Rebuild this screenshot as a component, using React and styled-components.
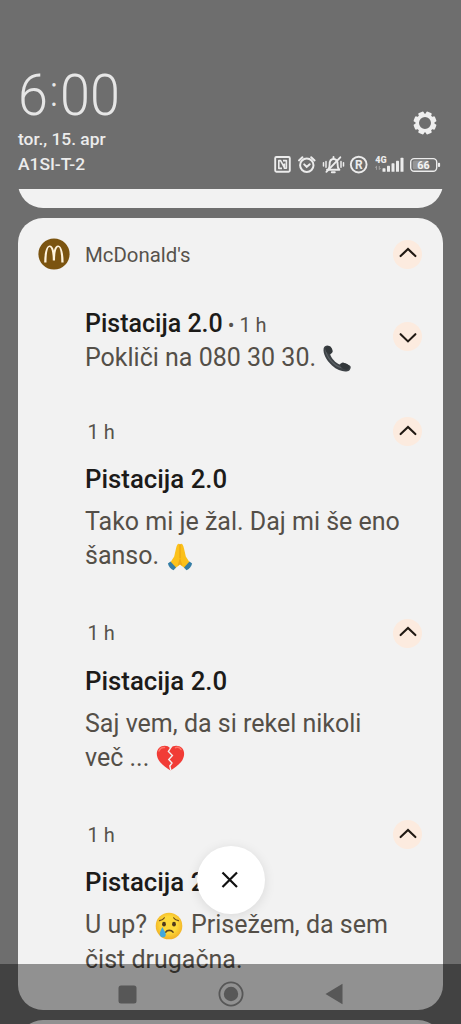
import React from "react";
import styled, { createGlobalStyle, css } from "styled-components";

const GlobalStyle = createGlobalStyle`
    * {
        box-sizing: border-box;
    }

    body {
        margin: 0;
        background: #6e6e6e;
        font-family: Roboto, "Liberation Sans", sans-serif;
    }

    svg {
        display: block;
        flex: none;
    }
`

const Screen = styled.div`
    position: relative;
    width: 461px;
    height: 1024px;
    overflow: hidden;
    background: #6e6e6e;

    display: flex;
    flex-direction: column;
`

const StatusHeader = styled.header`
    flex: none;
    height: 189px;
    padding: 66px 20px 12px 18px;
    color: #ececec;

    display: flex;
    justify-content: space-between;
`

const ClockArea = styled.div`
    display: flex;
    flex-direction: column;
`

const Clock = styled.div`
    height: 61px;
    line-height: 58px;
    font-size: 58px;
    font-weight: 300;
    white-space: nowrap;
    color: #e6e6e6;
    transform: scaleX(0.93);
    transform-origin: left;

    display: flex;
`

const ClockColon = styled.span`
    font-size: 43px;
    line-height: 50px;
    padding: 0 2px;
`

const StatusText = styled.div`
    line-height: 25px;
    font-size: 17.4px;
    font-weight: 500;
    white-space: nowrap;
`

const StatusSide = styled.div`
    display: flex;
    flex-direction: column;
    align-items: flex-end;
    justify-content: space-between;
    padding-top: 45px;
`

const GearWrap = styled.div`
    padding-right: 4px;
`

const StatusIcons = styled.div`
    height: 25px;

    display: flex;
    align-items: center;
`

const Shade = styled.main`
    flex: 1;
    min-height: 0;
    overflow: hidden;

    display: flex;
    flex-direction: column;
    padding: 0 18px;
`

const Peek = styled.div`
    flex: none;
    overflow: hidden;
    height: ${(props) => props.$height}px;

    display: flex;
    align-items: ${(props) => (props.$end ? "flex-end" : "flex-start")};
`

const PeekCard = styled.div`
    flex: none;
    width: 100%;
    height: 80px;
    background: #f2f2f2;
    border-radius: 25px;
`

const Card = styled.section`
    flex: none;
    height: 792px;
    margin: 10px 0;
    padding: 20px 21px 0 20px;
    background: #f2f2f2;
    border-radius: 25px;
`

const CardHeader = styled.div`
    height: 32px;

    display: flex;
    align-items: center;
`

const AppName = styled.div`
    flex: 1;
    margin-left: 15px;
    padding-top: 1px;
    font-size: 20.4px;
    line-height: 28px;
    color: #57524c;
`

const ToggleButton = styled.button`
    flex: none;
    width: 29px;
    height: 29px;
    padding: 0;
    border: 0;
    border-radius: 50%;
    background: #fcebdf;

    display: flex;
    align-items: center;
    justify-content: center;
`

const List = styled.div`
    padding-left: 47px;
`

const Collapsed = styled.article`
    padding-top: 39px;
    height: 147.5px;

    display: flex;
    justify-content: space-between;
`

const CollapsedToggle = styled.div`
    padding-top: 13px;
`

const Expanded = styled.article`
    height: 201.7px;
`

const MetaRow = styled.div`
    height: 28px;

    display: flex;
    align-items: center;
    justify-content: space-between;
`

const metaText = css`
    font-size: 20px;
    color: #57524c;
`

const Time = styled.span`
    ${metaText}
    padding-left: 2.5px;
    line-height: 28px;
`

const InlineTime = styled.span`
    ${metaText}
    font-weight: 400;
`

const Title = styled.div`
    line-height: 30px;
    font-size: ${(props) => props.$size || 25}px;
    font-weight: 500;
    color: #1c1b19;
    white-space: nowrap;
    margin-top: ${(props) => props.$top || 0}px;
`

const Message = styled.div`
    line-height: 34.4px;
    font-size: 25px;
    color: #544f48;
    white-space: nowrap;
    margin-top: ${(props) => props.$top || 0}px;
`

const Line = styled.div`
    display: flex;
    align-items: center;
    white-space: pre;
`

const EmojiBox = styled.span`
    padding: 0 ${(props) => props.$right || 0}px 0 ${(props) => props.$left || 0}px;
`

const CloseButton = styled.button`
    position: absolute;
    left: 197px;
    top: 846px;
    width: 67.5px;
    height: 68px;
    padding: 0 1px 0 0;
    border: 0;
    border-radius: 50%;
    background: #fff;
    box-shadow: 0 2px 12px rgba(0, 0, 0, 0.1);

    display: flex;
    align-items: center;
    justify-content: center;
`

const NavBar = styled.nav`
    position: absolute;
    left: 0;
    right: 0;
    bottom: 0;
    height: 60px;
    padding: 0 117.5px 0 117.5px;
    background: rgba(0, 0, 0, 0.4);

    display: flex;
    align-items: center;
    justify-content: space-between;
`

function Gear() {
    const teeth = [0, 45, 90, 135, 180, 225, 270, 315]
    return (
        <svg width="24" height="24" viewBox="-12 -12 24 24">
            {teeth.map((angle) => (
                <rect
                    key={angle}
                    x="-2.9"
                    y="-11.5"
                    width="5.8"
                    height="5"
                    rx="1.2"
                    fill="#efefef"
                    transform={`rotate(${angle + 22.5})`}
                />
            ))}
            <circle r="7.8" fill="none" stroke="#efefef" strokeWidth="3.6" />
        </svg>
    )
}

function StatusGlyphs() {
    const bars = [3.5, 6, 8.5, 11, 14]
    return (
        <svg width="168" height="25" viewBox="0 0 168 25" fill="none" stroke="#ececec">
            <g strokeWidth="1.9" strokeLinejoin="round">
                <rect x="2.2" y="5" width="14.6" height="14.8" rx="1.2" />
                <path d="M9 16.4H5.8V8.600H7.600L11.400 15.600M10 8.600H13.400V16.300H11.400V11.500" strokeWidth="1.6" />
            </g>
            <g strokeWidth="2" strokeLinecap="round">
                <circle cx="33.8" cy="13.2" r="6.7" />
                <path d="M26 8.4l3.4-3.2M41.6 8.4l-3.4-3.2M31.2 12.4l2.5 2.5 3-2.7" />
            </g>
            <g strokeWidth="1.9" strokeLinecap="round">
                <path d="M54 17.700h12.400M55.400 17.200c1-1.200 1.200-2.400 1.200-4.700 0-3.300 1.700-5.500 4-5.500s4 2.200 4 5.500c0 2.300.3 3.500 1.400 4.700" />
                <path d="M60.500 5v1.500M58.800 20.300h3" />
                <path d="M67.300 5.300L53.400 19.800" />
                <path d="M53 9.600v5.600M50.500 10.800v3.200M68 9.600v5.600M70.500 10.800v3.200" strokeWidth="1.500" />
            </g>
            <circle cx="85.7" cy="12.6" r="7.9" strokeWidth="1.900" />
            <text x="85.9" y="17" textAnchor="middle" fontSize="12" fontWeight="700" fill="#ececec" stroke="none">R</text>
            <text x="102.3" y="11.4" fontSize="9" fontWeight="900" fill="#ececec" stroke="none">4G</text>
            <path d="M103.500 17.800v-3.500l-1.400 1.400M106.300 14v3.500l1.400-1.400" strokeWidth="0.800" opacity="0.500" />
            {bars.map((h, i) => (
                <rect key={h} x={109.5 + i * 4.5} y={19.8 - h} width="3" height={h} rx="0.6" fill="#ececec" stroke="none" />
            ))}
            <rect x="137.700" y="6.600" width="26" height="12.600" rx="3.500" strokeWidth="1.400" />
            <rect x="139.700" y="8.600" width="16" height="8.600" rx="1.500" fill="#959595" stroke="none" />
            <rect x="164.900" y="10.700" width="2.200" height="4.400" rx="1" fill="#ececec" stroke="none" />
            <text x="150.400" y="16.700" textAnchor="middle" fontSize="10.800" fontWeight="700" fill="#f4f4f4" stroke="none">66</text>
        </svg>
    )
}

function AppLogo() {
    return (
        <svg width="32" height="32" viewBox="0 0 32 32">
            <circle cx="16" cy="16" r="15.600" fill="#7b5410" />
            <path
                d="M6.200 24.500C6.200 14 8.500 7.600 11.700 7.600C13.500 7.600 15 9.500 15.900 12.500C16.800 9.500 18.300 7.600 20.100 7.600C23.300 7.600 25.600 14 25.600 24.500H23.300C23.300 15 22.100 9 20.200 9C18.400 9 17 14.500 17 22.600H14.800C14.800 14.500 13.400 9 11.600 9C9.700 9 8.500 15 8.500 24.500Z"
                fill="#fff3dd"
            />
        </svg>
    )
}

function Chevron({ down }) {
    return (
        <svg width="18" height="12" viewBox="0 0 18 12" fill="none" transform={down ? "translate(0 1)" : "translate(0 -1.5)"}>
            <path
                d={down ? "M1.600 2.200L9 9.400L16.400 2.200" : "M1.600 9.600L9 2.400L16.400 9.600"}
                stroke="#211a14"
                strokeWidth="2.100"
                strokeLinecap="round"
            />
        </svg>
    )
}

function Toggle({ down }) {
    return (
        <ToggleButton aria-label={down ? "Expand" : "Collapse"}>
            <Chevron down={down} />
        </ToggleButton>
    )
}

function PhoneEmoji() {
    return (
        <svg width="30" height="30" viewBox="0 0 30 30">
            <path
                d="M1.600 5.500C2 3 5.200 1.700 7.300 3L10.300 8.300C10.700 9.700 9 10.500 8.200 11.600C9.500 15.700 13.500 19.800 17.600 21.600C18.900 20.500 19.900 19.200 21.700 19.700L27.700 22.500C29.500 23.600 28.600 26.200 27.300 27.400C24 29.600 16.500 28.400 10 22.500C4 16.900 0.900 10.500 1.600 5.500Z"
                fill="#3e4347"
            />
            <path d="M3.600 6.500C4.200 13 10.500 22.500 20.500 25" fill="none" stroke="#5b6165" strokeWidth="1.200" />
            <ellipse cx="7" cy="7" rx="3.300" ry="4" fill="#33383b" transform="rotate(-28 7 7)" />
            <ellipse cx="23" cy="23.300" rx="4.400" ry="3" fill="#33383b" transform="rotate(22 23 23.300)" />
        </svg>
    )
}

function PrayEmoji() {
    return (
        <svg width="26" height="28" viewBox="0 0 26 28">
            <path d="M11.900 0.700C10.500 0.800 9.700 2.500 9 5.500L7.200 13.500L3 20L8 25.500L13 21.500V1.500Z" fill="#fcc21b" />
            <path d="M14.100 0.700C15.500 0.800 16.300 2.500 17 5.500L18.800 13.500L23 20L18 25.500L13 21.500V1.500Z" fill="#fbc01a" />
            <path d="M13 1.200V15" fill="none" stroke="#e59c10" strokeWidth="0.900" />
            <path d="M13 14.500L10.500 23L13 21.200L15.500 23Z" fill="#eeaa15" />
            <path d="M0.900 20.500L3.500 18.500L9 24.500L6.500 27.300C4 26.500 1.600 23.800 0.900 20.500Z" fill="#347da5" />
            <path d="M25.100 20.500L22.500 18.500L17 24.500L19.500 27.300C22 26.500 24.400 23.800 25.100 20.500Z" fill="#347da5" />
        </svg>
    )
}

function HeartEmoji() {
    return (
        <svg width="29" height="26" viewBox="0 0 29 26">
            <path
                d="M14.300 3.200C11.500 -0.200 6 0 3 3C-0.500 7 0.400 12.500 4 17C7 20.700 11 23.300 14.500 25.500C18 23.300 22 20.700 25 17C28.600 12.500 29.300 7 26 3C23 0 17.500 -0.200 14.300 3.200Z"
                fill="#f13c36"
            />
            <path d="M3 6C4 3.500 6 2.200 8.500 2.500M19.500 2.600C21.500 1.800 24 2.600 25 4.500" fill="none" stroke="#ff7569" strokeWidth="1.500" strokeLinecap="round" />
            <path d="M15.500 1.500L12.400 6.500L16.400 10.500L12.800 14.500L16 18L13.800 21L14.900 25.500" fill="none" stroke="#f2f2f2" strokeWidth="1.400" />
        </svg>
    )
}

function CryEmoji() {
    return (
        <svg width="28" height="28" viewBox="0 0 28 28">
            <defs>
                <radialGradient id="face" cx="50%" cy="45%" r="55%">
                    <stop offset="0.55" stopColor="#fdd93a" />
                    <stop offset="1" stopColor="#f2b127" />
                </radialGradient>
            </defs>
            <circle cx="14" cy="14" r="13.300" fill="url(#face)" />
            <path d="M4.500 8.700C6.700 8.500 8.400 7.500 9.400 5.800M23.500 8.700C21.300 8.500 19.600 7.500 18.600 5.800" fill="none" stroke="#6d4c1a" strokeWidth="1.200" strokeLinecap="round" />
            <ellipse cx="9" cy="12.200" rx="1.900" ry="2.400" fill="#4f3a1c" />
            <ellipse cx="19" cy="12.200" rx="1.900" ry="2.400" fill="#4f3a1c" />
            <path d="M10.800 20.200C12 17.800 16.500 17.800 18 20.200" fill="none" stroke="#5c421b" strokeWidth="1.600" strokeLinecap="round" />
            <path d="M7.400 15C6 18 4.600 20 4.800 22.400C5.200 26.200 10.800 26.200 10.800 22.400C10.800 20 8.500 18 7.400 15Z" fill="#42a8dc" />
        </svg>
    )
}

function Notification({ children }) {
    return (
        <Expanded>
            <MetaRow>
                <Time>1 h</Time>
                <Toggle />
            </MetaRow>
            <Title $top={18.5} $size={25.8}>Pistacija 2.0</Title>
            <Message $top={11}>{children}</Message>
        </Expanded>
    )
}

export default function App() {
    return (
        <>
            <GlobalStyle />
            <Screen>
                <StatusHeader>
                    <ClockArea>
                        <Clock>6<ClockColon>:</ClockColon>00</Clock>
                        <StatusText>tor., 15. apr</StatusText>
                        <StatusText>A1SI-T-2</StatusText>
                    </ClockArea>
                    <StatusSide>
                        <GearWrap>
                            <Gear />
                        </GearWrap>
                        <StatusIcons>
                            <StatusGlyphs />
                        </StatusIcons>
                    </StatusSide>
                </StatusHeader>
                <Shade>
                    <Peek $height={19} $end>
                        <PeekCard />
                    </Peek>
                    <Card>
                        <CardHeader>
                            <AppLogo />
                            <AppName>McDonald's</AppName>
                            <Toggle />
                        </CardHeader>
                        <List>
                            <Collapsed>
                                <div>
                                    <Title>
                                        Pistacija 2.0<InlineTime> • 1 h</InlineTime>
                                    </Title>
                                    <Message $top={1}>
                                        <Line>Pokliči na 080 30 30. <PhoneEmoji /></Line>
                                    </Message>
                                </div>
                                <CollapsedToggle>
                                    <Toggle down />
                                </CollapsedToggle>
                            </Collapsed>
                            <Notification>
                                <Line>Tako mi je žal. Daj mi še eno</Line>
                                <Line>šanso. <EmojiBox $left={2}><PrayEmoji /></EmojiBox></Line>
                            </Notification>
                            <Notification>
                                <Line>Saj vem, da si rekel nikoli</Line>
                                <Line>več ... <EmojiBox $left={1}><HeartEmoji /></EmojiBox></Line>
                            </Notification>
                            <Notification>
                                <Line>U up? <EmojiBox $left={1.5} $right={2}><CryEmoji /></EmojiBox> Prisežem, da sem</Line>
                                <Line>čist drugačna.</Line>
                            </Notification>
                        </List>
                    </Card>
                    <Peek $height={4}>
                        <PeekCard />
                    </Peek>
                </Shade>
                <CloseButton aria-label="Close">
                    <svg width="18" height="18" viewBox="0 0 18 18">
                        <path d="M1.500 1.500L16 16M16 1.500L1.500 16" stroke="#111" strokeWidth="2.200" />
                    </svg>
                </CloseButton>
                <NavBar>
                    <svg width="19" height="19" viewBox="0 0 19 19">
                        <rect x="0.500" y="0.500" width="18" height="18" rx="2.500" fill="#575757" />
                    </svg>
                    <svg width="26" height="26" viewBox="0 0 26 26">
                        <circle cx="13" cy="13" r="11.600" fill="none" stroke="#575757" strokeWidth="1.800" />
                        <circle cx="13" cy="13" r="7.200" fill="#575757" />
                    </svg>
                    <svg width="19" height="22" viewBox="0 0 19 22">
                        <path d="M0.500 11L17.500 0.800V21.200Z" fill="#575757" />
                    </svg>
                </NavBar>
            </Screen>
        </>
    )
}
